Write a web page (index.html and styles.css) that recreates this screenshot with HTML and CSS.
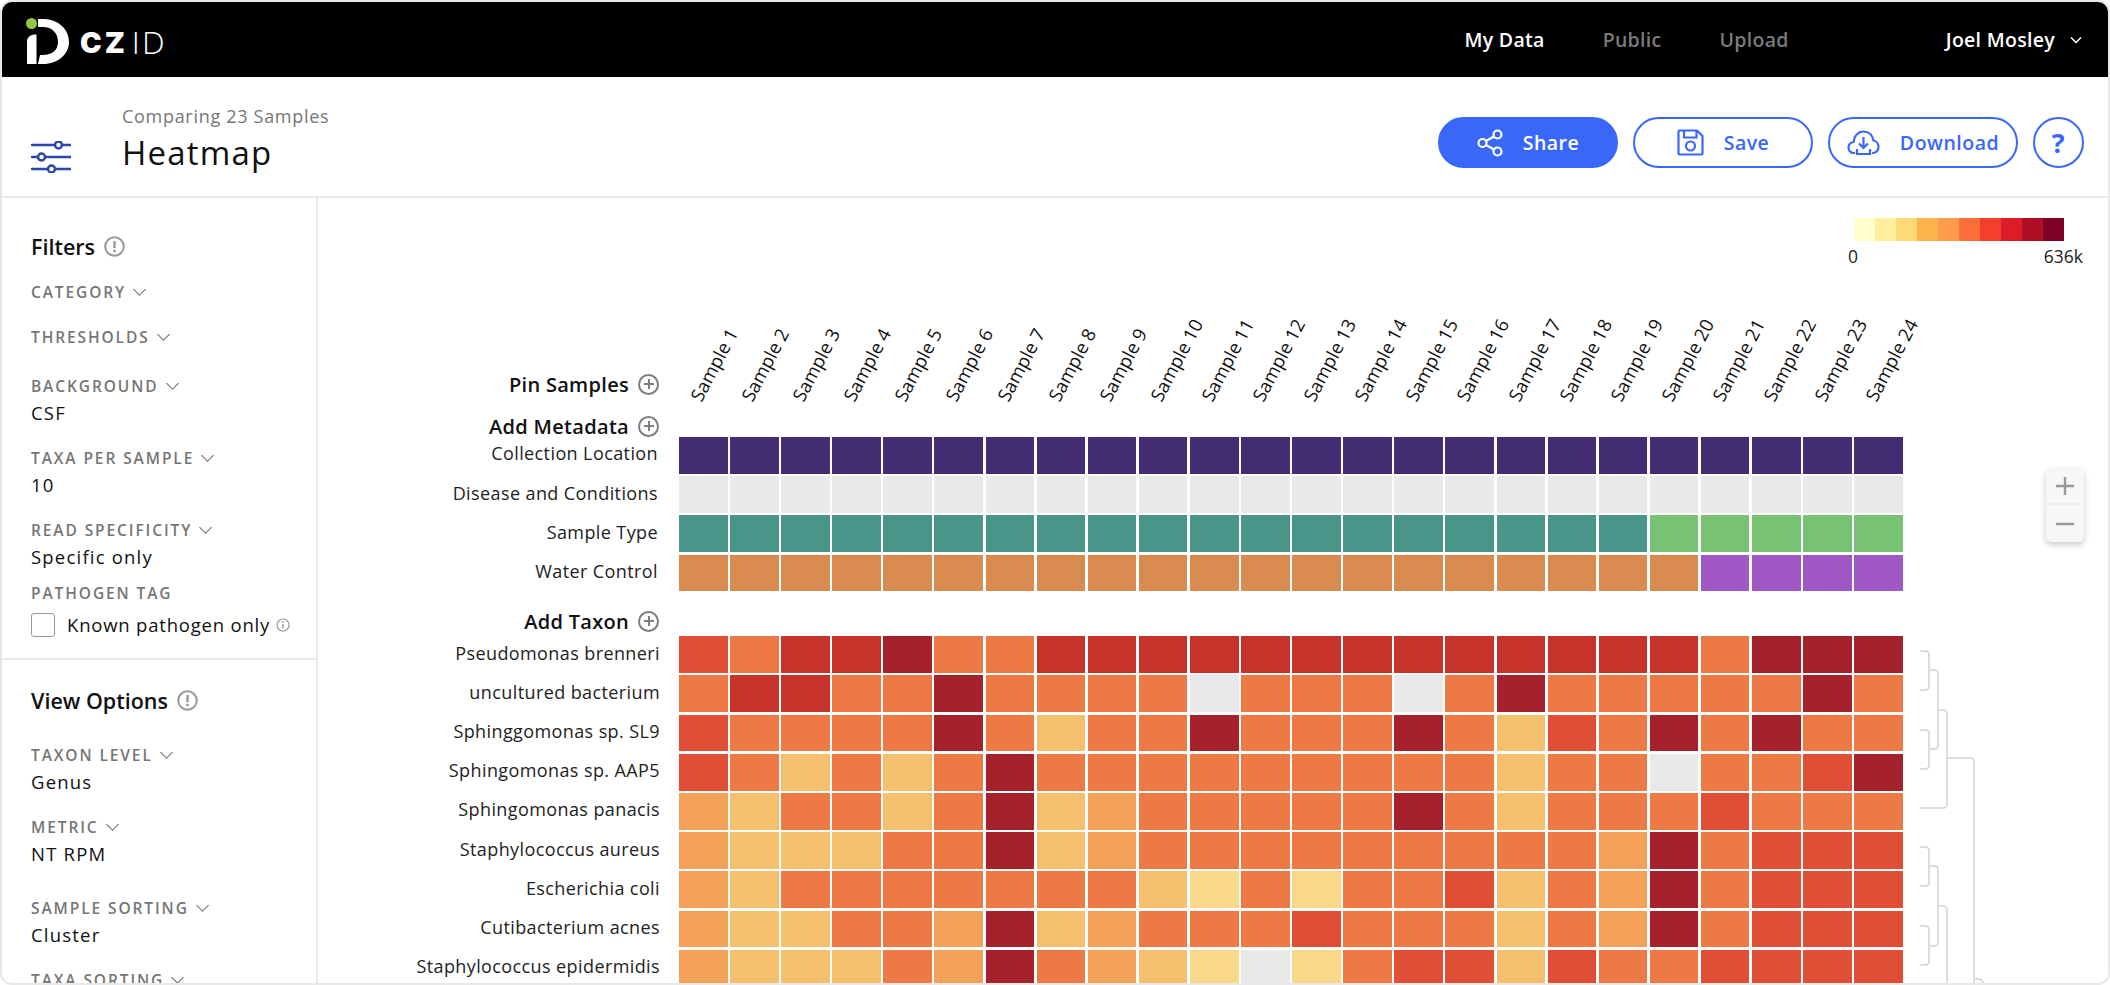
FILE: index.html
```html
<!DOCTYPE html>
<html lang="en">
<head>
    <meta charset="UTF-8">
    <title>CZ ID - Heatmap</title>
    <link rel="stylesheet" href="styles.css">
</head>
<body>
    <div class="window">
        <nav class="nav">
            <div class="logo">
                <svg class="logo-mark" width="46" height="50" viewBox="24 14 46 50">
                    <circle cx="31.5" cy="21.5" r="5.5" fill="#95c83f"/>
                    <path d="M27 62V40C27 35 30 32.500 36.500 32.500V62Z" fill="#fff"/>
                    <path d="M38 17H43C58 17 69 27 69 40C69 52 58 62 43 62H38L40 53H43C52 53 58 48 58 40C58 31 52 25 43 25H38Z" fill="#fff"/>
                </svg>
                <span class="logo-cz">CZ</span>
                <span class="logo-id">ID</span>
            </div>
            <div class="nav-links">
                <a class="nav-link active">My Data</a>
                <a class="nav-link">Public</a>
                <a class="nav-link">Upload</a>
            </div>
            <div class="nav-user">
                Joel Mosley
                <svg width="12" height="8" viewBox="0 0 12 8"><path d="M1 1.500L6 6.500L11 1.500" fill="none" stroke="#fff" stroke-width="1.500"/></svg>
            </div>
        </nav>

        <header class="header">
            <svg class="filter-toggle" width="40" height="32" viewBox="0 0 40 32">
                <path d="M1 4H40M1 16H40M1 28H40" stroke="#2a47a9" stroke-width="2.500" stroke-linecap="round"/>
                <circle cx="27.500" cy="4" r="3.500" fill="#fff" stroke="#2a47a9" stroke-width="2.500"/>
                <circle cx="10.500" cy="16" r="3.500" fill="#fff" stroke="#2a47a9" stroke-width="2.500"/>
                <circle cx="20.500" cy="28" r="3.500" fill="#fff" stroke="#2a47a9" stroke-width="2.500"/>
            </svg>
            <div class="title-block">
                <div class="subtitle">Comparing 23 Samples</div>
                <h1 class="title">Heatmap</h1>
            </div>
            <div class="actions">
                <button class="btn btn-primary">
                    <svg width="26" height="28" viewBox="0 0 26 28" fill="none" stroke="#fff" stroke-width="2.200">
                        <circle cx="5.500" cy="14" r="4"/><circle cx="20.500" cy="5.500" r="4"/><circle cx="20.500" cy="22.500" r="4"/>
                        <path d="M9 12L17 7.500M9 16L17 20.500"/>
                    </svg>
                    Share
                </button>
                <button class="btn">
                    <svg width="27" height="27" viewBox="0 0 27 27" fill="none" stroke="#3867fa" stroke-width="2.200">
                        <path d="M1.500 2.500Q1.500 1.500 2.500 1.500H20L25.500 7V24.500Q25.500 25.500 24.500 25.500H2.500Q1.500 25.500 1.500 24.500Z"/>
                        <path d="M7 1.500V8.500H19.500V1.500"/>
                        <circle cx="13.500" cy="17" r="4.500"/>
                    </svg>
                    Save
                </button>
                <button class="btn">
                    <svg width="33" height="26" viewBox="0 0 33 26" fill="none" stroke="#3867fa" stroke-width="2.200">
                        <path d="M8 23H7C3.500 23 1.500 20.500 1.500 17.500C1.500 14.500 3.500 12.500 6.500 12C7 6 11 1.500 16.500 1.500C22 1.500 25.500 5.500 26.500 10.500C29.500 11 31.500 14 31.500 17C31.500 20.500 29 23 26 23H25"/>
                        <path d="M16.500 7V18M12 13.500L16.500 18L21 13.500M10 19V24H23V19"/>
                    </svg>
                    Download
                </button>
                <button class="btn btn-help">?</button>
            </div>
        </header>

        <div class="body">
            <aside class="sidebar">
                <section class="side-section">
                    <h2 class="side-title">Filters
                        <svg width="21" height="21" viewBox="0 0 21 21"><circle cx="10.500" cy="10.500" r="9.300" fill="none" stroke="#999" stroke-width="2"/><path d="M10.500 5V12" stroke="#999" stroke-width="2.400"/><circle cx="10.500" cy="15" r="1.400" fill="#999"/></svg>
                    </h2>
                    <div class="option short"><div class="option-label">CATEGORY<i class="chev"></i></div></div>
                    <div class="option shorter"><div class="option-label">THRESHOLDS<i class="chev"></i></div></div>
                    <div class="option"><div class="option-label">BACKGROUND<i class="chev"></i></div><div class="option-value">CSF</div></div>
                    <div class="option"><div class="option-label">TAXA PER SAMPLE<i class="chev"></i></div><div class="option-value">10</div></div>
                    <div class="option tight"><div class="option-label">READ SPECIFICITY<i class="chev"></i></div><div class="option-value">Specific only</div></div>
                    <div class="option-label">PATHOGEN TAG</div>
                    <label class="check">
                        <span class="check-box"></span>
                        Known pathogen only
                        <svg width="14" height="14" viewBox="0 0 14 14"><circle cx="7" cy="7" r="6" fill="none" stroke="#999" stroke-width="1.200"/><path d="M7 6V10.500" stroke="#999" stroke-width="1.400"/><circle cx="7" cy="4" r=".9" fill="#999"/></svg>
                    </label>
                </section>
                <section class="side-section view-options">
                    <h2 class="side-title">View Options
                        <svg width="21" height="21" viewBox="0 0 21 21"><circle cx="10.500" cy="10.500" r="9.300" fill="none" stroke="#999" stroke-width="2"/><path d="M10.500 5V12" stroke="#999" stroke-width="2.400"/><circle cx="10.500" cy="15" r="1.400" fill="#999"/></svg>
                    </h2>
                    <div class="option"><div class="option-label">TAXON LEVEL<i class="chev"></i></div><div class="option-value">Genus</div></div>
                    <div class="option wide"><div class="option-label">METRIC<i class="chev"></i></div><div class="option-value">NT RPM</div></div>
                    <div class="option"><div class="option-label">SAMPLE SORTING<i class="chev"></i></div><div class="option-value">Cluster</div></div>
                    <div class="option"><div class="option-label">TAXA SORTING<i class="chev"></i></div></div>
                </section>
            </aside>

            <main class="main">
                <div class="legend">
                    <div class="legend-bar">
                        <i class="l1"></i><i class="l2"></i><i class="l3"></i><i class="l4"></i><i class="l5"></i>
                        <i class="l6"></i><i class="l7"></i><i class="l8"></i><i class="l9"></i><i class="l10"></i>
                    </div>
                    <div class="legend-labels"><span>0</span><span>636k</span></div>
                </div>

                <div class="zoom-control">
                    <button class="zoom-btn"><svg width="18" height="18" viewBox="0 0 18 18"><path d="M0 9H18M9 0V18" stroke="#999" stroke-width="2.400"/></svg></button>
                    <button class="zoom-btn"><svg width="18" height="18" viewBox="0 0 18 18"><path d="M0 9H18" stroke="#999" stroke-width="2.400"/></svg></button>
                </div>

                <div class="heatmap">
                    <div class="hm-row">
                        <div class="hm-head">Pin Samples <i class="add"></i></div>
                        <div class="col-labels" id="colLabels"></div>
                    </div>
                    <div class="hm-head meta-head">Add Metadata <i class="add"></i></div>
                    <div class="hm-rows" id="metaRows"></div>
                    <div class="hm-head taxon-head">Add Taxon <i class="add"></i></div>
                    <div class="hm-body">
                        <div class="hm-rows taxon-rows" id="taxonRows"></div>
                        <svg class="dendro" width="80" height="353" viewBox="0 0 80 353" fill="none" stroke="#d2d2d2" stroke-width="1.500">
                            <path d="M10 20H15Q19 20 19 24V55Q19 59 15 59H10"/>
                            <path d="M20 39H24Q28 39 28 43V114Q28 118 24 118H20"/>
                            <path d="M10 99H15Q19 99 19 103V134Q19 138 15 138H10"/>
                            <path d="M29 79H33Q37 79 37 83V173Q37 177 33 177H10"/>
                            <path d="M38 127H60Q64 127 64 131V353"/>
                            <path d="M10 216H15Q19 216 19 220V251Q19 255 15 255H10"/>
                            <path d="M20 235H24Q28 235 28 239V311Q28 315 24 315H20"/>
                            <path d="M10 295H15Q19 295 19 299V330Q19 334 15 334H10"/>
                            <path d="M29 275H33Q37 275 37 279V353"/>
                            <path d="M65 348H68Q73 348 73 353"/>
                        </svg>
                    </div>
                </div>
            </main>
        </div>
    </div>
    <script src="script.js"></script>
</body>
</html>
```

FILE: styles.css
```css
* {
    box-sizing: border-box;
}

body {
    margin: 0;
    background: #fff;
    font-family: "Open Sans", sans-serif;
    color: #111;
}

.window {
    display: flex;
    flex-direction: column;
    height: 985px;
    border: 2px solid #e8e8e8;
    border-radius: 12px;
    overflow: hidden;
    position: relative;
}

/* top bar */
.nav {
    display: flex;
    align-items: center;
    height: 75px;
    flex: none;
    padding: 0 26px 0 22px;
    background: #000;
    color: #fff;
    font-size: 19.500px;
    font-weight: 600;
    letter-spacing: .3px;
}

.logo {
    display: flex;
    align-items: center;
    margin-top: 2px;
}

.logo-cz {
    margin-left: 10px;
    margin-top: 4px;
    font-family: Inter, sans-serif;
    font-weight: 900;
    font-size: 29px;
    letter-spacing: 3px;
}

.logo-id {
    margin-left: 4px;
    margin-top: 2px;
    font-weight: 300;
    font-size: 32px;
    letter-spacing: 2px;
}

.nav-links {
    display: flex;
    gap: 58px;
    margin-left: auto;
    margin-right: 157px;
}

.nav-link {
    color: #7b7b7b;
}

.nav-link.active {
    color: #fff;
}

.nav-user {
    display: flex;
    align-items: center;
    gap: 15px;
}

/* page header */
.header {
    display: flex;
    align-items: center;
    flex: none;
    height: 121px;
    padding: 0 24px 0 29px;
    border-bottom: 2px solid #eaeaea;
}

.filter-toggle {
    margin-top: 40px;
}

.title-block {
    margin-left: 51px;
    margin-top: 6px;
}

.subtitle {
    color: #767676;
    font-size: 18px;
    font-weight: 500;
    letter-spacing: .7px;
    line-height: 22px;
}

.title {
    margin: 5px 0 0;
    font-size: 33px;
    font-weight: 500;
    letter-spacing: 1.200px;
    line-height: 42px;
}

.actions {
    display: flex;
    gap: 15px;
    margin-left: auto;
    margin-top: 12px;
}

.btn {
    display: flex;
    align-items: center;
    justify-content: center;
    gap: 20px;
    width: 180px;
    height: 51px;
    border: 2px solid #3867fa;
    border-radius: 26px;
    background: #fff;
    color: #3867fa;
    font-family: inherit;
    font-size: 19.500px;
    font-weight: 600;
    letter-spacing: .5px;
}

.btn:nth-child(3) {
    width: 190px;
}

.btn-primary {
    background: #3867fa;
    color: #fff;
}

.btn-help {
    width: 51px;
    font-size: 27px;
    font-weight: 700;
}

/* sidebar */
.body {
    display: flex;
    flex: 1;
    min-height: 0;
}

.sidebar {
    width: 316px;
    flex: none;
    border-right: 2px solid #eaeaea;
    overflow: hidden;
}

.side-section {
    padding: 35px 10px 0 29px;
}

.view-options {
    margin-top: 21px;
    padding-top: 27px;
    border-top: 2px solid #eaeaea;
}

.side-title {
    display: flex;
    align-items: center;
    gap: 9px;
    height: 26px;
    margin: 0 0 23px;
    font-size: 21.500px;
    font-weight: 600;
}

.view-options .side-title {
    margin-bottom: 32px;
}

.option {
    margin-bottom: 23px;
}

.option.short {
    margin-bottom: 25px;
}

.option.shorter {
    margin-bottom: 29px;
}

.option.tight {
    margin-bottom: 14px;
}

.option.wide {
    margin-bottom: 32px;
}

.option-label {
    display: flex;
    align-items: center;
    height: 20px;
    color: #767676;
    font-size: 15.500px;
    font-weight: 600;
    letter-spacing: 1.900px;
}

.chev {
    width: 9px;
    height: 9px;
    margin: -5px 0 0 9px;
    border-right: 1.500px solid #666;
    border-bottom: 1.500px solid #666;
    transform: rotate(45deg);
}

.option-value {
    margin-top: 5px;
    font-size: 18.500px;
    line-height: 24px;
    letter-spacing: 1.200px;
}

.check {
    display: flex;
    align-items: center;
    margin-top: 10px;
    font-size: 18.500px;
    letter-spacing: .8px;
    line-height: 24px;
    white-space: nowrap;
}

.check-box {
    width: 24px;
    height: 24px;
    margin-right: 12px;
    border: 1.500px solid #999;
    border-radius: 3px;
}

.check svg {
    margin-left: 6px;
}

/* heatmap */
.main {
    flex: 1;
    min-width: 0;
    position: relative;
    padding-top: 20px;
    overflow: hidden;
}

.legend {
    width: 235px;
    margin: 0 25px 0 auto;
}

.legend-bar {
    display: flex;
    height: 23px;
    margin: 0 19px 0 6px;
}

.legend-bar i {
    flex: 1;
}

.l1 { background: #ffffcc; }
.l2 { background: #ffeda0; }
.l3 { background: #fed976; }
.l4 { background: #feb24c; }
.l5 { background: #fd9c4b; }
.l6 { background: #fc6e37; }
.l7 { background: #f43f2f; }
.l8 { background: #dc1d27; }
.l9 { background: #b00d27; }
.l10 { background: #800026; }

.legend-labels {
    display: flex;
    justify-content: space-between;
    margin-top: 4px;
    font-size: 17.500px;
    line-height: 22px;
    color: #222;
}

.zoom-control {
    position: absolute;
    top: 270px;
    right: 24px;
    width: 38px;
    border-radius: 5px;
    background: #f7f7f7;
    box-shadow: 0 3px 6px rgba(0, 0, 0, .2);
}

.zoom-btn {
    display: flex;
    align-items: center;
    justify-content: center;
    width: 38px;
    height: 37px;
    padding: 0;
    border: none;
    background: none;
}

.zoom-btn:first-child {
    border-bottom: 2px solid #eee;
}

.heatmap {
    margin-top: 103px;
}

.hm-row {
    display: flex;
    align-items: center;
}

.hm-head {
    display: flex;
    align-items: center;
    justify-content: flex-end;
    gap: 9px;
    width: 341px;
    height: 30px;
    padding-bottom: 2px;
    font-size: 20px;
    font-weight: 600;
    letter-spacing: .3px;
}

.meta-head {
    height: 20px;
    margin-top: 17px;
}

.taxon-head {
    height: 20px;
    margin-top: 21px;
    margin-bottom: 4px;
}

.add {
    position: relative;
    flex: none;
    width: 21px;
    height: 21px;
    border: 2px solid #7d7d7d;
    border-radius: 50%;
}

.add::before {
    content: "";
    position: absolute;
    left: 3.500px;
    top: 7.500px;
    width: 10px;
    height: 2px;
    background: #7d7d7d;
}

.add::after {
    content: "";
    position: absolute;
    left: 7.500px;
    top: 3.500px;
    width: 2px;
    height: 10px;
    background: #7d7d7d;
}

.col-labels {
    display: flex;
    height: 30px;
    margin-left: 20px;
}

.col-label {
    width: 51.100px;
    flex: none;
    position: relative;
}

.col-label span {
    position: absolute;
    left: 26px;
    bottom: -5px;
    font-size: 18.500px;
    line-height: 22px;
    white-space: nowrap;
    color: #111;
    transform: rotate(-62deg);
    transform-origin: left bottom;
}

.hm-rows {
    display: flex;
    flex-direction: column;
    gap: 2.500px;
}

.hm-body {
    display: flex;
}

.hm-line {
    display: flex;
    align-items: center;
}

.hm-label {
    width: 340px;
    padding-bottom: 4px;
    text-align: right;
    font-size: 18px;
    letter-spacing: .4px;
    white-space: nowrap;
    color: #222;
}

.hm-cells {
    display: flex;
    gap: 2.500px;
    margin-left: 21px;
}

.taxon-rows .hm-label {
    width: 342px;
}

.taxon-rows .hm-cells {
    margin-left: 19px;
}

.cell {
    width: 48.600px;
    height: 36.700px;
}

.a { background: #a5212c; }
.b { background: #c7322b; }
.c { background: #df4e35; }
.d { background: #ed7945; }
.e { background: #f3a158; }
.f { background: #f5c06d; }
.g { background: #f8d989; }
.n { background: #e9e9e9; }
.purple { background: #432c72; }
.teal { background: #4a9589; }
.green { background: #78c273; }
.tan { background: #da8b50; }
.violet { background: #a058c4; }

.dendro {
    flex: none;
    margin-left: 7px;
    margin-top: -5px;
    overflow: visible;
}
```

FILE: script.js
```js
const metaRows = [
    ["Collection Location", Array(24).fill("purple")],
    ["Disease and Conditions", Array(24).fill("n")],
    ["Sample Type", Array(19).fill("teal").concat(Array(5).fill("green"))],
    ["Water Control", Array(20).fill("tan").concat(Array(4).fill("violet"))]
];

// one letter per cell, classes a-g run dark to pale, n = no data
const taxonRows = [
    ["Pseudomonas brenneri", "cdbbaddbbb bbbbbbbbb bdaaa"],
    ["uncultured bacterium", "dbbddadddd ndddndadd dddad"],
    ["Sphinggomonas sp. SL9", "cddddadfdd adddadfcd adadd"],
    ["Sphingomonas sp. AAP5", "cdfdfdaddd ddddddfdd nddca"],
    ["Sphingomonas panacis", "efddfdafed ddddadfdd dcddd"],
    ["Staphylococcus aureus", "efffddafed dddddddde adccc"],
    ["Escherichia coli", "efdddddddf gdgddcfde adccc"],
    ["Cutibacterium acnes", "effddeafed ddcdddfde adccc"],
    ["Staphylococcus epidermidis", "efffdeadef gngdccfcd dcccc"]
].map(([name, cells]) => [name, cells.replace(/ /g, "").split("")]);

function addRows(parentId, rows) {
    const parent = document.getElementById(parentId);
    rows.forEach(([name, cells]) => {
        const line = document.createElement("div");
        line.className = "hm-line";
        const label = document.createElement("div");
        label.className = "hm-label";
        label.textContent = name;
        const wrap = document.createElement("div");
        wrap.className = "hm-cells";
        cells.forEach(c => {
            const cell = document.createElement("div");
            cell.className = "cell " + c;
            wrap.appendChild(cell);
        });
        line.appendChild(label);
        line.appendChild(wrap);
        parent.appendChild(line);
    });
}

const colLabels = document.getElementById("colLabels");
for (let i = 1; i <= 24; i++) {
    const col = document.createElement("div");
    col.className = "col-label";
    col.innerHTML = "<span>Sample " + i + "</span>";
    colLabels.appendChild(col);
}

addRows("metaRows", metaRows);
addRows("taxonRows", taxonRows);
```
